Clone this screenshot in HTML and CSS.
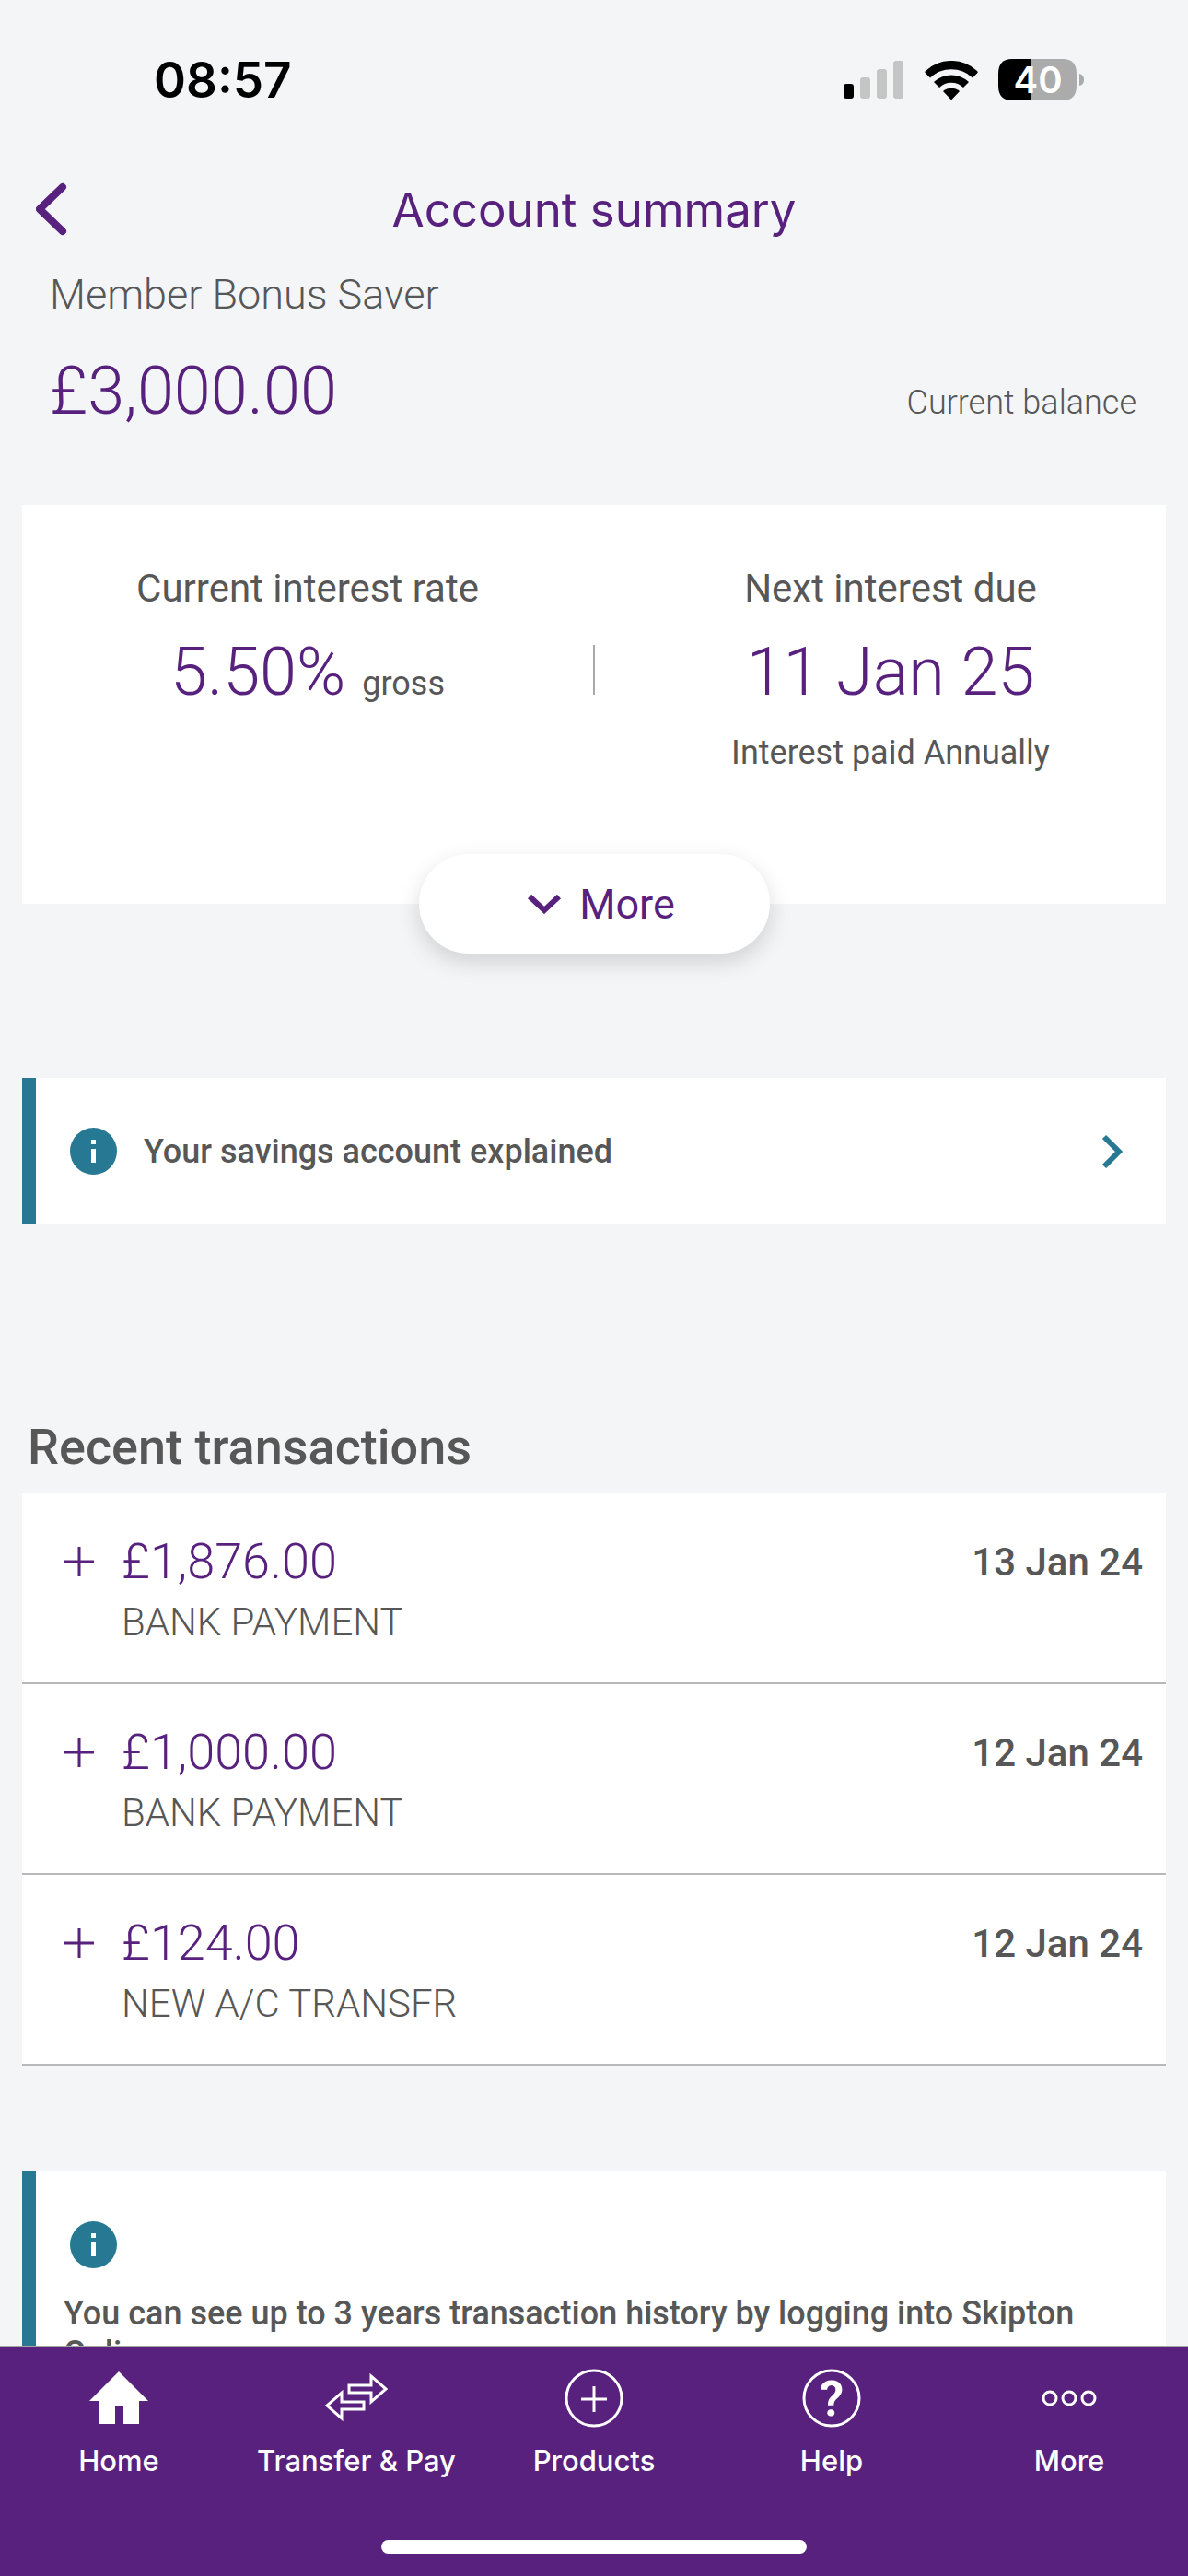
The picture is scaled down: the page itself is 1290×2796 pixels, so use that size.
FILE: index.html
```html
<!DOCTYPE html>
<html lang="en">
  <head>
    <meta charset="UTF-8" />
    <meta name="viewport" content="width=device-width, initial-scale=1.0" />
    <title>Account summary</title>
    <link rel="stylesheet" href="styles.css">
  </head>
  <body>
    <div class="status-bar">
      <span class="time">08:57</span>
      <div class="status-icons">
        <svg width="66" height="42" viewBox="0 0 66 42" aria-hidden="true">
          <rect x="0" y="25" width="11" height="16" rx="3" fill="#000" />
          <rect x="18" y="18" width="11" height="23" rx="3" fill="#c4c6c6" />
          <rect x="36" y="9" width="11" height="32" rx="3" fill="#c4c6c6" />
          <rect x="54" y="0" width="11" height="41" rx="3" fill="#c4c6c6" />
        </svg>
        <svg width="58" height="43" viewBox="0 0 58 43" aria-hidden="true">
          <path d="M0.500 13Q0 12 1 11A41 41 0 0 1 57 11Q58 12 57.500 13L52 18.500A33 33 0 0 0 6 18.500Z" />
          <path d="M10 23A28 28 0 0 1 48 23L42 29A19 19 0 0 0 16 29Z" />
          <path d="M20 33A14 14 0 0 1 38 33L29 42.500Z" />
        </svg>
        <svg width="94" height="46" viewBox="0 0 94 46" aria-hidden="true">
          <path d="M15 0H35V45H15Q0 45 0 29V16Q0 0 15 0Z" fill="#000" />
          <path d="M35 0H70Q85 0 85 16V29Q85 45 70 45H35Z" fill="#ababab" />
          <path d="M88 16Q93 17 93 22.500T88 29Z" fill="#ababab" />
          <text class="battery-level" x="43" y="37" text-anchor="middle">40</text>
        </svg>
      </div>
    </div>

    <header class="header">
      <a href="#" class="back" aria-label="Back">
        <svg width="34" height="58" viewBox="0 0 34 58">
          <path d="M29 5L4 29L29 53" />
        </svg>
      </a>
      <h1>Account summary</h1>
    </header>

    <main>
      <section class="balance">
        <p class="account-name">Member Bonus Saver</p>
        <div class="balance-row">
          <span class="big">£3,000.00</span>
          <span class="balance-label">Current balance</span>
        </div>
      </section>

      <section class="card interest">
        <div class="interest-cols">
          <div class="interest-col">
            <p class="label">Current interest rate</p>
            <p class="value"><span class="big">5.50%</span> <span class="small">gross</span></p>
          </div>
          <div class="divider"></div>
          <div class="interest-col next">
            <p class="label">Next interest due</p>
            <p class="value"><span class="big">11 Jan 25</span></p>
            <p class="small">Interest paid Annually</p>
          </div>
        </div>
        <button type="button" class="more-btn">
          <svg width="36" height="22" viewBox="0 0 36 22" aria-hidden="true">
            <path d="M2 3L18 18L34 3" />
          </svg>
          More
        </button>
      </section>

      <a href="#" class="card callout">
        <svg class="info" width="51" height="51" viewBox="0 0 51 51" aria-hidden="true">
          <circle cx="25.500" cy="25.500" r="25.500" />
          <rect x="23" y="13" width="5" height="5" />
          <rect x="23" y="23" width="5" height="15" />
        </svg>
        <span>Your savings account explained</span>
        <svg class="arrow" width="24" height="38" viewBox="0 0 24 38" aria-hidden="true">
          <path d="M3 3L19 19L3 35" />
        </svg>
      </a>

      <section class="transactions">
        <h2>Recent transactions</h2>
        <ul class="card">
          <li>
            <svg class="plus" width="32" height="32" viewBox="0 0 32 32" aria-label="plus">
              <path d="M0 16H32M16 0V32" />
            </svg>
            <span class="amount">£1,876.00</span>
            <span class="date">13 Jan 24</span>
            <span class="desc">BANK PAYMENT</span>
          </li>
          <li>
            <svg class="plus" width="32" height="32" viewBox="0 0 32 32" aria-label="plus">
              <path d="M0 16H32M16 0V32" />
            </svg>
            <span class="amount">£1,000.00</span>
            <span class="date">12 Jan 24</span>
            <span class="desc">BANK PAYMENT</span>
          </li>
          <li>
            <svg class="plus" width="32" height="32" viewBox="0 0 32 32" aria-label="plus">
              <path d="M0 16H32M16 0V32" />
            </svg>
            <span class="amount">£124.00</span>
            <span class="date">12 Jan 24</span>
            <span class="desc">NEW A/C TRANSFR</span>
          </li>
        </ul>
      </section>

      <section class="card history">
        <svg class="info" width="51" height="51" viewBox="0 0 51 51" aria-hidden="true">
          <circle cx="25.500" cy="25.500" r="25.500" />
          <rect x="23" y="13" width="5" height="5" />
          <rect x="23" y="23" width="5" height="15" />
        </svg>
        <p>You can see up to 3 years transaction history by logging into Skipton Online.</p>
      </section>
    </main>

    <nav class="tab-bar">
      <div class="tabs">
        <a href="#">
          <svg width="66" height="64" viewBox="0 0 66 64" aria-hidden="true">
            <path d="M33 3L65 35H55V60H38V41H29V60H11V35H1Z" fill="#fff" />
          </svg>
          Home
        </a>
        <a href="#">
          <svg class="line" width="68" height="64" viewBox="0 0 68 64" aria-hidden="true">
            <path d="M26 18H50V8L66 22L50 36V26H26Z" />
            <path d="M42 36H18V26L2 40L18 54V44H42Z" />
          </svg>
          Transfer &amp; Pay
        </a>
        <a href="#">
          <svg class="line" width="64" height="64" viewBox="0 0 64 64" aria-hidden="true">
            <circle cx="32" cy="32" r="30" />
            <path d="M18 33H46M32 19V47" />
          </svg>
          Products
        </a>
        <a href="#">
          <svg class="line" width="64" height="64" viewBox="0 0 64 64" aria-hidden="true">
            <circle cx="32" cy="32" r="30" />
            <text class="question" x="32" y="51" text-anchor="middle">?</text>
          </svg>
          Help
        </a>
        <a href="#">
          <svg class="line" width="64" height="64" viewBox="0 0 64 64" aria-hidden="true">
            <circle cx="11" cy="32" r="7" />
            <circle cx="32" cy="32" r="7" />
            <circle cx="53" cy="32" r="7" />
          </svg>
          More
        </a>
      </div>
      <div class="home-indicator"></div>
    </nav>
  </body>
</html>
```
FILE: styles.css
```css
* {
  box-sizing: border-box;
}
body {
  margin: 0;
  height: 100vh;
  display: flex;
  flex-direction: column;
  overflow: hidden;
  background-color: #f3f5f7;
  color: #575757;
  font-family: Roboto, sans-serif;
}
h1,
h2,
p,
ul {
  margin: 0;
  padding: 0;
}
a {
  color: inherit;
  text-decoration: none;
}
svg {
  flex: none;
  display: block;
}

/* status bar */
.status-bar {
  flex: none;
  height: 174px;
  padding: 0 112px 0 167px;
  display: flex;
  justify-content: space-between;
  align-items: center;
  color: #000;
  font-family: Inter, sans-serif;
}
.time {
  font-size: 53px;
  font-weight: 600;
}
.status-icons {
  display: flex;
  align-items: center;
  gap: 22px;
}
.battery-level {
  font-size: 40px;
  font-weight: 600;
  fill: #fff;
}

/* header */
.header {
  flex: none;
  height: 106px;
  padding: 0 39px;
  display: grid;
  grid-template-columns: 1fr auto 1fr;
  align-items: center;
  color: #57217d;
}
.header h1 {
  font-family: Inter, sans-serif;
  font-size: 51px;
  font-weight: 400;
}
.back path {
  fill: none;
  stroke: #57217d;
  stroke-width: 8;
  stroke-linecap: round;
  stroke-linejoin: round;
}

/* content */
main {
  flex: 1;
  min-height: 0;
  padding: 0 24px;
  overflow-y: auto;
  scrollbar-width: none;
}
.card {
  background-color: #fff;
}
.big {
  font-size: 72px;
  line-height: 84px;
  font-weight: 300;
  color: #57217d;
}
.small {
  font-size: 36px;
  line-height: 42px;
}
.balance {
  padding: 13px 32px 81px 30px;
}
.account-name {
  font-size: 45px;
  line-height: 54px;
  font-weight: 300;
}
.balance-row {
  display: flex;
  justify-content: space-between;
  align-items: baseline;
  margin-top: 36px;
}
.balance-label {
  font-size: 36px;
  font-weight: 300;
}

/* interest card */
.interest {
  display: flex;
  flex-direction: column;
  align-items: center;
  padding-top: 66px;
}
.interest-cols {
  align-self: stretch;
  display: grid;
  grid-template-columns: 1fr 2px 1fr;
}
.interest-col {
  display: flex;
  flex-direction: column;
  align-items: center;
  gap: 24px;
}
.interest-col.next {
  padding-left: 22px;
}
.label {
  font-size: 42px;
  line-height: 50px;
}
.value {
  display: flex;
  align-items: baseline;
  gap: 18px;
}
.divider {
  height: 54px;
  margin-top: 86px;
  background-color: #a9a9a9;
}
.more-btn {
  display: flex;
  justify-content: center;
  align-items: center;
  gap: 20px;
  width: 381px;
  height: 108px;
  margin-top: 89px;
  margin-bottom: -54px;
  padding: 0 0 0 16px;
  border: none;
  border-radius: 54px;
  background-color: #fff;
  box-shadow: 0 9px 24px rgba(0, 0, 0, 0.15);
  color: #57217d;
  font-family: Roboto, sans-serif;
  font-size: 45px;
}
.more-btn path {
  fill: none;
  stroke: #57217d;
  stroke-width: 6;
}

/* callouts */
.callout {
  display: flex;
  align-items: center;
  gap: 29px;
  height: 159px;
  margin-top: 189px;
  padding: 0 46px 0 37px;
  border-left: 15px solid #277893;
  font-size: 36px;
  font-weight: 500;
}
.callout span {
  flex: 1;
}
.info circle {
  fill: #277893;
}
.info rect {
  fill: #fff;
}
.arrow path {
  fill: none;
  stroke: #277893;
  stroke-width: 6;
}
.history {
  margin-top: 114px;
  padding: 55px 30px;
  border-left: 15px solid #277893;
  font-size: 36px;
  line-height: 43px;
  font-weight: 500;
}
.history .info {
  margin: 0 0 28px 7px;
}

/* transactions */
.transactions {
  margin-top: 210px;
}
.transactions h2 {
  margin: 0 6px 18px;
  font-size: 54px;
  line-height: 64px;
  font-weight: 500;
}
.transactions ul {
  list-style: none;
}
.transactions li {
  display: grid;
  grid-template-columns: 32px 1fr auto;
  column-gap: 30px;
  row-gap: 9px;
  align-items: center;
  padding: 42px 25px 40px 46px;
  border-bottom: 2px solid #b8b8ba;
}
.plus path {
  stroke: #57217d;
  stroke-width: 3;
}
.amount {
  font-size: 54px;
  line-height: 64px;
  font-weight: 300;
  color: #57217d;
}
.date {
  font-size: 42px;
  font-weight: 500;
}
.desc {
  grid-column: 2 / 4;
  font-size: 42px;
  line-height: 50px;
  font-weight: 300;
}

/* bottom tabs */
.tab-bar {
  flex: none;
  padding: 24px 0;
  border-top: 1px solid #a5a5a8;
  background-color: #57217d;
}
.tabs {
  display: grid;
  grid-template-columns: repeat(5, 1fr);
}
.tabs a {
  display: flex;
  flex-direction: column;
  align-items: center;
  gap: 16px;
  color: #fff;
  font-family: Inter, sans-serif;
  font-size: 31px;
  line-height: 40px;
  font-weight: 500;
}
.line circle,
.line path {
  fill: none;
  stroke: #fff;
  stroke-width: 3;
}
.question {
  font-family: Roboto, sans-serif;
  font-size: 54px;
  font-weight: 600;
  fill: #fff;
}
.home-indicator {
  width: 462px;
  height: 15px;
  margin: 66px auto 0;
  border-radius: 8px;
  background-color: #fff;
}
```
